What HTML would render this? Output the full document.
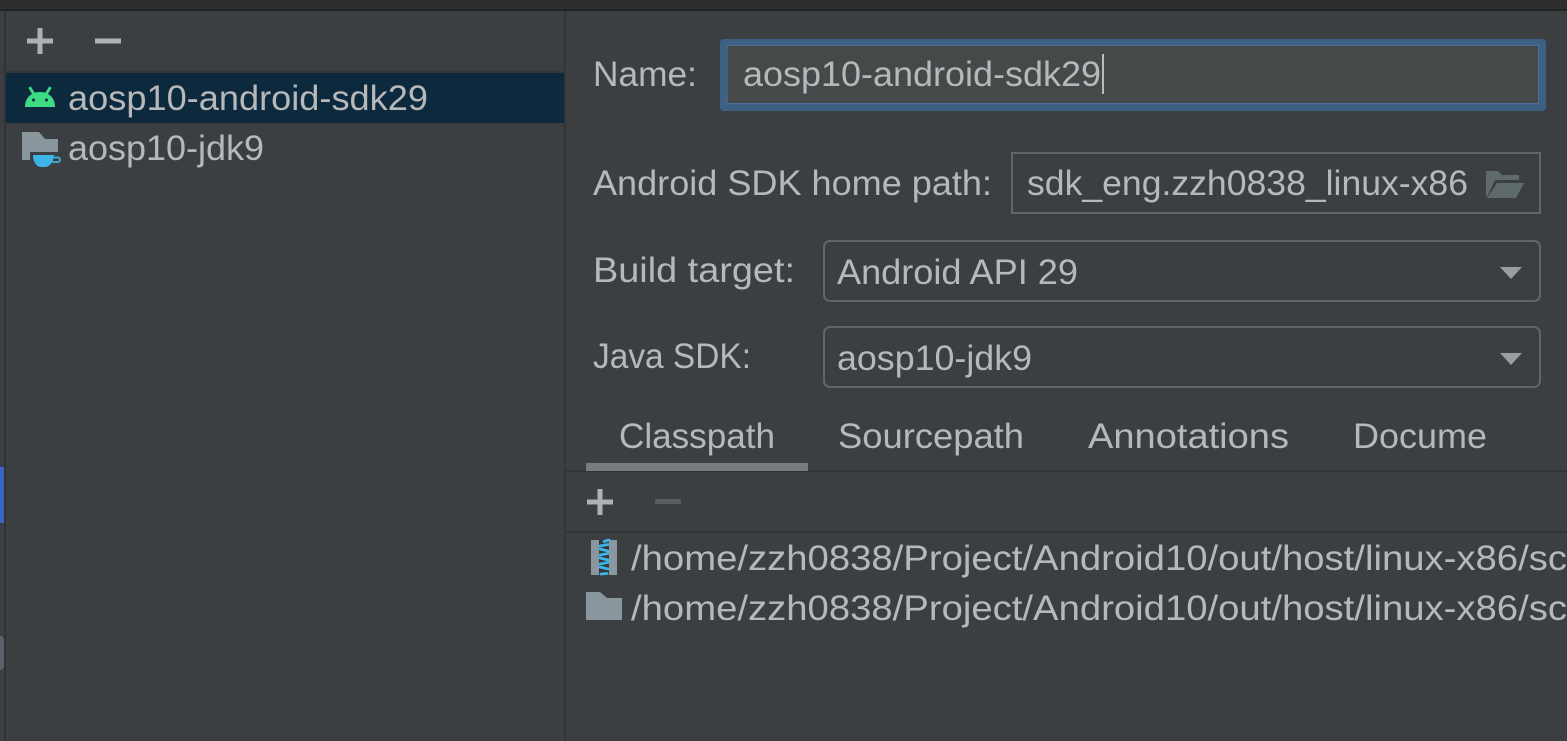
<!DOCTYPE html>
<html><head><meta charset="utf-8">
<style>
html,body{margin:0;padding:0;background:#3c3f41;width:1567px;height:741px;overflow:hidden}
svg{display:block}
text{font-family:"Liberation Sans",sans-serif;font-size:35.5px;fill:#b6b8ba}
</style></head>
<body>
<svg width="1567" height="741" viewBox="0 0 1567 741" xmlns="http://www.w3.org/2000/svg">
<rect width="1567" height="741" fill="#3c3f41"/>
<!-- top bar -->
<rect width="1567" height="10" fill="#2f2e2e"/>
<rect y="9" width="1567" height="2" fill="#242424"/>
<!-- left strip -->
<rect x="0" y="11" width="4" height="730" fill="#3b3e44"/>
<rect x="4" y="11" width="2" height="730" fill="#303234"/>
<rect x="0" y="467" width="4" height="56" fill="#3666c4"/>
<path d="M0 636h2l2 3v28l-2 3H0z" fill="#5c606b"/>
<!-- dividers -->
<rect x="564" y="11" width="2" height="730" fill="#333537"/>
<rect x="6" y="71" width="558" height="2" fill="#333537"/>
<rect x="566" y="470" width="1001" height="2" fill="#323334"/>
<rect x="566" y="531" width="1001" height="2" fill="#323334"/>
<!-- selected row -->
<rect x="6" y="73" width="558" height="50" fill="#0d293e"/>
<!-- top toolbar -->
<path d="M37.500 28h5v10.500H53v5H42.500V54h-5V43.500H27v-5h10.500z" fill="#afb1b3"/>
<rect x="95" y="38.500" width="26" height="5" fill="#afb1b3"/>
<!-- android icon -->
<g fill="#3ddc84">
<path d="M25 107c0-9 6-15 15-15s15 6 15 15z"/>
<path d="M29 88l1.500-1 5 8-1.500 1zM51 88l-1.500-1-5 8 1.500 1z" stroke="#3ddc84" stroke-width="1"/>
</g>
<circle cx="33.500" cy="100" r="1.500" fill="#0d293e"/><circle cx="46.500" cy="100" r="1.500" fill="#0d293e"/>
<text x="68" y="110" textLength="360" lengthAdjust="spacingAndGlyphs">aosp10-android-sdk29</text>
<!-- jdk icon -->
<path d="M22 160v-28h17l6 7h13v21z" fill="#8b979f"/>
<rect x="30" y="152" width="30" height="16" fill="#3c3f41"/>
<path d="M33 155h21c0 6-4 12-9 12h-4c-5 0-8-6-8-12z" fill="#3db3e6"/>
<path d="M54 157.500h4c2.500 0 2.500 4.500 0 4.500h-6" fill="none" stroke="#3db3e6" stroke-width="1.800"/>
<text x="68" y="160" textLength="196" lengthAdjust="spacingAndGlyphs">aosp10-jdk9</text>
<!-- name -->
<text x="593" y="86" textLength="104" lengthAdjust="spacingAndGlyphs">Name:</text>
<rect x="720" y="39" width="826" height="72" rx="4" fill="#3d6185"/>
<rect x="727" y="45.500" width="811.500" height="58" fill="#45494a" stroke="#4a6f93" stroke-width="1"/>
<text x="743" y="86" textLength="358" lengthAdjust="spacingAndGlyphs">aosp10-android-sdk29</text>
<rect x="1102" y="54" width="2" height="40" fill="#bbbbbb"/>
<!-- sdk path -->
<text x="593" y="195" textLength="399" lengthAdjust="spacingAndGlyphs">Android SDK home path:</text>
<rect x="1012" y="153" width="528" height="60" fill="#3c3f41" stroke="#646464" stroke-width="2"/>
<text x="1027" y="195" textLength="441" lengthAdjust="spacingAndGlyphs">sdk_eng.zzh0838_linux-x86</text>
<path d="M1486 197v-26h12l4 4h17v5h-24l-7 15z" fill="#5f6a6d"/>
<path d="M1497 183h27l-8 15h-29z" fill="#5f6a6d"/>
<!-- build target -->
<text x="593" y="282" textLength="202" lengthAdjust="spacingAndGlyphs">Build target:</text>
<rect x="824" y="241" width="716" height="60" rx="6" fill="#3c3f41" stroke="#646464" stroke-width="2"/>
<text x="837" y="284" textLength="241" lengthAdjust="spacingAndGlyphs">Android API 29</text>
<path d="M1500 267h22l-11 12z" fill="#9a9da1"/>
<!-- java sdk -->
<text x="593" y="368" textLength="158" lengthAdjust="spacingAndGlyphs">Java SDK:</text>
<rect x="824" y="327" width="716" height="60" rx="6" fill="#3c3f41" stroke="#646464" stroke-width="2"/>
<text x="837" y="370" textLength="195" lengthAdjust="spacingAndGlyphs">aosp10-jdk9</text>
<path d="M1500 353h22l-11 12z" fill="#9a9da1"/>
<!-- tabs -->
<text x="619" y="448" textLength="156" lengthAdjust="spacingAndGlyphs">Classpath</text>
<text x="838" y="448" textLength="186" lengthAdjust="spacingAndGlyphs">Sourcepath</text>
<text x="1088" y="448" textLength="201" lengthAdjust="spacingAndGlyphs">Annotations</text>
<text x="1353" y="448" textLength="134" lengthAdjust="spacingAndGlyphs">Docume</text>
<rect x="586" y="463" width="222" height="8" fill="#787b80"/>
<!-- lower toolbar -->
<path d="M597.500 489h5v10.500H613v5h-10.500V515h-5v-10.500H587v-5h10.500z" fill="#afb1b3"/>
<rect x="655" y="499" width="26" height="5" fill="#5a5d5f"/>
<!-- zip icon -->
<rect x="591" y="540" width="26" height="35" fill="#8b979f"/>
<rect x="599" y="540" width="10" height="35" fill="#343638"/>
<g stroke="#3db3e6" stroke-width="2.800" fill="none" stroke-linecap="round">
<path d="M604 541.500l5-1.500M600 546l8-1.500M600 549l8 2M600 555l8-1.500M600 558l8 2M600 564l8-1.500M600 567l8 2M601 574l6-.5"/>
</g>
<text x="631" y="570" textLength="936" lengthAdjust="spacingAndGlyphs">/home/zzh0838/Project/Android10/out/host/linux-x86/sc</text>
<!-- folder -->
<path d="M586 620v-28h14l7 6h15v22z" fill="#8b979f"/>
<text x="631" y="620" textLength="936" lengthAdjust="spacingAndGlyphs">/home/zzh0838/Project/Android10/out/host/linux-x86/sc</text>
</svg>
</body></html>
